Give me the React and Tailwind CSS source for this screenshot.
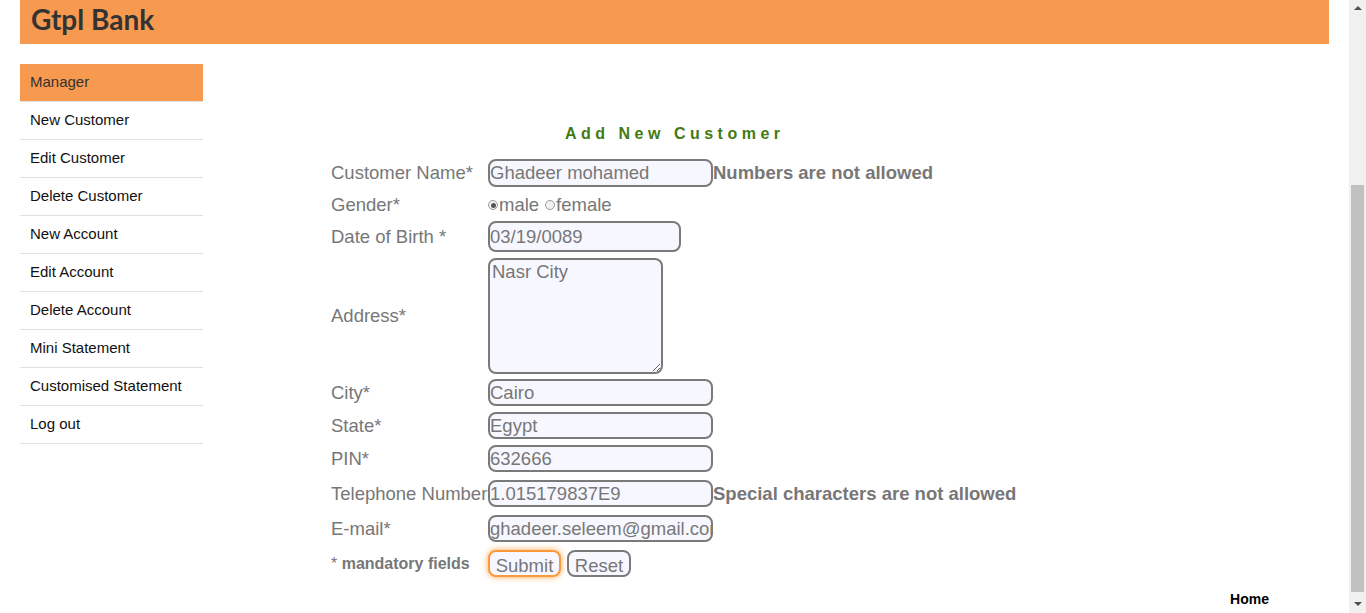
const menu = [
  "New Customer",
  "Edit Customer",
  "Delete Customer",
  "New Account",
  "Edit Account",
  "Delete Account",
  "Mini Statement",
  "Customised Statement",
  "Log out",
];

const arial = { fontFamily: '"Liberation Sans", Arial, sans-serif' };

const inputCls =
  "h-full rounded-[8px] border-2 border-[#7a7a7a] bg-[#f7f8ff] px-0 text-[18.5px] leading-none text-[#777] outline-none";

function Row({ label, mt, h, children, note }) {
  return (
    <div className={`flex items-center ${mt} ${h}`}>
      <div className="w-[157px] shrink-0 whitespace-nowrap text-[18.5px] text-[#777]">{label}</div>
      {children}
      {note && <span className="whitespace-nowrap text-[18.5px] font-bold text-[#777]">{note}</span>}
    </div>
  );
}

function Radio({ checked }) {
  return (
    <span className="flex h-[10px] w-[10px] items-center justify-center rounded-full border border-[#999] bg-[#f2f2f2]">
      {checked && <span className="h-[5px] w-[5px] rounded-full bg-[#555]" />}
    </span>
  );
}

export default function App() {
  return (
    <div className="flex h-[613px] overflow-hidden bg-white" style={arial}>
      <div className="flex flex-1 flex-col px-[20px]">
        <header className="flex h-[44px] shrink-0 items-center bg-[#f79a50] pb-[6px] pl-[11px]">
          <h1
            className="text-[28px] font-bold leading-none text-[#333]"
            style={{ fontFamily: "Lato, sans-serif" }}
          >
            Gtpl Bank
          </h1>
        </header>

        <div className="flex items-start">
          <nav className="mt-[20px] w-[183px] shrink-0 text-[15px]">
            <div className="flex h-[38px] items-center border-b border-[#e0e0e0] bg-[#f79a50] px-[10px] text-[#333]">
              Manager
            </div>
            {menu.map((item) => (
              <div
                key={item}
                className="flex h-[38px] items-center border-b border-[#e0e0e0] px-[10px] text-[#111]"
              >
                {item}
              </div>
            ))}
          </nav>

          <form className="ml-[128px] flex flex-col" onSubmit={(e) => e.preventDefault()}>
            <h2 className="ml-[234px] mt-[80px] h-[20px] text-[16px] font-bold leading-[20px] tracking-[4.5px] text-[#437a12]">
              Add New Customer
            </h2>

            <Row label="Customer Name*" mt="mt-[15px]" h="h-[28px]" note="Numbers are not allowed">
              <input className={`${inputCls} w-[225px]`} defaultValue="Ghadeer mohamed" style={arial} />
            </Row>

            <Row label="Gender*" mt="mt-[6px]" h="h-[24px]">
              <div className="flex items-center text-[18.5px] text-[#777]">
                <Radio checked />
                <span className="ml-[1px]">male</span>
                <span className="ml-[6px]"><Radio /></span>
                <span className="ml-[1px]">female</span>
              </div>
            </Row>

            <Row label="Date of Birth *" mt="mt-[4px]" h="h-[31px]">
              <input className={`${inputCls} w-[193px]`} defaultValue="03/19/0089" style={arial} />
            </Row>

            <Row label="Address*" mt="mt-[6px]" h="h-[116px]">
              <textarea
                className="h-full w-[175px] resize rounded-[8px] border-2 border-[#7a7a7a] bg-[#f7f8ff] px-[2px] py-[1px] text-[18.5px] leading-[22px] text-[#777] outline-none"
                defaultValue="Nasr City"
                style={arial}
              />
            </Row>

            <Row label="City*" mt="mt-[5px]" h="h-[27px]">
              <input className={`${inputCls} w-[225px]`} defaultValue="Cairo" style={arial} />
            </Row>

            <Row label="State*" mt="mt-[6px]" h="h-[27px]">
              <input className={`${inputCls} w-[225px]`} defaultValue="Egypt" style={arial} />
            </Row>

            <Row label="PIN*" mt="mt-[6px]" h="h-[27px]">
              <input className={`${inputCls} w-[225px]`} defaultValue="632666" style={arial} />
            </Row>

            <Row label="Telephone Number" mt="mt-[8px]" h="h-[27px]" note="Special characters are not allowed">
              <input className={`${inputCls} w-[225px]`} defaultValue="1.015179837E9" style={arial} />
            </Row>

            <Row label="E-mail*" mt="mt-[8px]" h="h-[27px]">
              <input className={`${inputCls} w-[225px]`} defaultValue="ghadeer.seleem@gmail.com" style={arial} />
            </Row>

            <div className="mt-[8px] flex h-[27px] items-center">
              <div className="w-[157px] shrink-0 text-[16px] text-[#777]">
                * <span className="font-bold">mandatory fields</span>
              </div>
              <button
                type="submit"
                className="h-full w-[73px] rounded-[8px] border-2 border-[#fb9a3c] bg-[#f7f8ff] text-[18.5px] text-[#777] shadow-[0_0_6px_#ffa54d]"
              >
                Submit
              </button>
              <button
                type="reset"
                className="ml-[6px] h-full w-[64px] rounded-[8px] border-2 border-[#7a7a7a] bg-[#f7f8ff] text-[18.5px] text-[#777]"
              >
                Reset
              </button>
            </div>
          </form>
        </div>

        <div className="mt-[14px] flex justify-end pr-[60px]">
          <a className="text-[14px] font-bold leading-[16px] text-black">Home</a>
        </div>
      </div>

      <div className="flex w-[17px] shrink-0 flex-col items-center bg-[#f0f0f0]">
        <div className="mt-[6px] h-0 w-0 border-x-[4px] border-b-[4px] border-x-transparent border-b-[#505050]" />
        <div className="mt-[175px] h-[407px] w-[13px] bg-[#c1c1c1]" />
        <div className="mt-[10px] h-0 w-0 border-x-[4px] border-t-[4px] border-x-transparent border-t-[#505050]" />
      </div>
    </div>
  );
}
